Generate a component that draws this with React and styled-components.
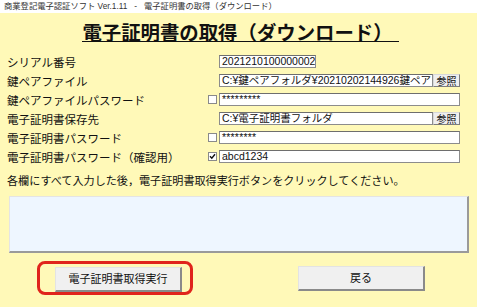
import React from "react";
import styled, { createGlobalStyle } from "styled-components";

const GlobalStyle = createGlobalStyle`
  html, body {
    margin: 0;
    padding: 0;
    background: #fff9b8;
    font-family: "Liberation Sans", "Noto Sans CJK JP", sans-serif;
    color: #111;
  }
`;

const Window = styled.div`
  width: 477px;
  height: 307px;
  background: #fff9b8;
  overflow: hidden;
`;

const TitleBar = styled.div`
  height: 13px;
  background: #fff;
  padding-left: 4px;
  font-size: 8.3px;
  line-height: 12px;
  color: #333;
  white-space: pre;
`;

const Heading = styled.h1`
  margin: 7px 0 0;
  height: 27px;
  text-align: center;
  font-family: "Noto Sans CJK JP", sans-serif;
  font-size: 19.4px;
  font-weight: 700;
  line-height: 24px;
`;

const HeadingText = styled.span`
  display: inline-block;
  padding-right: 6px;
  margin-left: 4px;
  border-bottom: 1px solid #111;
  line-height: 19px;
`;

const Form = styled.div`
  display: grid;
  grid-template-columns: 200px 12px 241px;
  grid-auto-rows: 19px;
  padding: 5px 0 0 7px;
`;

const Label = styled.div`
  display: flex;
  align-items: center;
  font-family: "Noto Sans CJK JP", sans-serif;
  font-size: 11.5px;
  white-space: nowrap;
`;

const CheckCell = styled.div`
  display: flex;
  align-items: center;
  padding-left: 1px;
`;

const Check = styled.span`
  display: inline-flex;
  align-items: center;
  justify-content: center;
  width: 7px;
  height: 7px;
  border: 1px solid #8a8a8a;
  background: #fff;
`;

const FieldCell = styled.div`
  display: flex;
  align-items: center;
`;

const Field = styled.div`
  box-sizing: border-box;
  width: ${(p) => p.width || "100%"};
  height: 13px;
  border: 1px solid #8c8c8c;
  border-top-color: #6e6e6e;
  background: #fff;
  font-size: 10.5px;
  line-height: 11px;
  padding-left: 2px;
  white-space: nowrap;
  overflow: hidden;
  letter-spacing: ${(p) => (p.mask ? "0.2px" : "0")};
`;

const BrowseButton = styled.div`
  box-sizing: border-box;
  flex: 0 0 27px;
  height: 13px;
  background: #efefef;
  border: 1px solid #d8d8d8;
  border-right-color: #7d7d7d;
  border-bottom-color: #7d7d7d;
  font-family: "Noto Sans CJK JP", sans-serif;
  font-size: 10px;
  line-height: 11px;
  text-align: center;
`;

const Notice = styled.p`
  margin: 6px 0 0 7px;
  font-family: "Noto Sans CJK JP", sans-serif;
  font-size: 11.1px;
  line-height: 16px;
  white-space: nowrap;
`;

const InfoBox = styled.div`
  box-sizing: border-box;
  margin: 8px 0 0 9px;
  width: 460px;
  height: 57px;
  background: #eef6ff;
  border: 1px solid #e4e4e4;
  border-right: 2px solid #9a9a9a;
  border-bottom: 2px solid #9a9a9a;
`;

const Actions = styled.div`
  display: flex;
  align-items: center;
  margin-top: 8px;
  padding-left: 37px;
  gap: 105px;
`;

const Highlight = styled.div`
  box-sizing: border-box;
  width: 156px;
  height: 34px;
  padding: 2px 8px 0 15px;
  border: 3px solid #e0241c;
  border-radius: 8px;
  display: flex;
  align-items: center;
`;

const Button = styled.div`
  box-sizing: border-box;
  width: ${(p) => p.width}px;
  height: 25px;
  background: #f0f0f0;
  border: 1px solid #e3e3e3;
  border-right: 2px solid #8a8a8a;
  border-bottom: 2px solid #8a8a8a;
  font-family: "Noto Sans CJK JP", sans-serif;
  font-size: 11px;
  line-height: 21px;
  text-align: center;
`;

const Tick = () => (
  <svg width="7" height="7" viewBox="0 0 7 7">
    <path d="M1 3.2 L2.8 5.2 L6 1.2" fill="none" stroke="#111" strokeWidth="1.4" />
  </svg>
);

const rows = [
  { label: "シリアル番号", value: "2021210100000002", width: "97px" },
  { label: "鍵ペアファイル", value: "C:¥鍵ペアフォルダ¥20210202144926鍵ペア", browse: true },
  { label: "鍵ペアファイルパスワード", value: "*********", check: "off", mask: true },
  { label: "電子証明書保存先", value: "C:¥電子証明書フォルダ", browse: true },
  { label: "電子証明書パスワード", value: "********", check: "off", mask: true },
  { label: "電子証明書パスワード（確認用）", value: "abcd1234", check: "on" },
];

export default function App() {
  return (
    <Window>
      <GlobalStyle />
      <TitleBar>{"商業登記電子認証ソフト Ver.1.11   -   電子証明書の取得（ダウンロード）"}</TitleBar>
      <Heading>
        <HeadingText>電子証明書の取得（ダウンロード）</HeadingText>
      </Heading>
      <Form>
        {rows.map((r) => (
          <React.Fragment key={r.label}>
            <Label>{r.label}</Label>
            <CheckCell>{r.check && <Check>{r.check === "on" && <Tick />}</Check>}</CheckCell>
            <FieldCell>
              <Field width={r.width} mask={r.mask}>{r.value}</Field>
              {r.browse && <BrowseButton>参照</BrowseButton>}
            </FieldCell>
          </React.Fragment>
        ))}
      </Form>
      <Notice>各欄にすべて入力した後，電子証明書取得実行ボタンをクリックしてください。</Notice>
      <InfoBox />
      <Actions>
        <Highlight>
          <Button width={128}>電子証明書取得実行</Button>
        </Highlight>
        <Button width={127}>戻る</Button>
      </Actions>
    </Window>
  );
}
